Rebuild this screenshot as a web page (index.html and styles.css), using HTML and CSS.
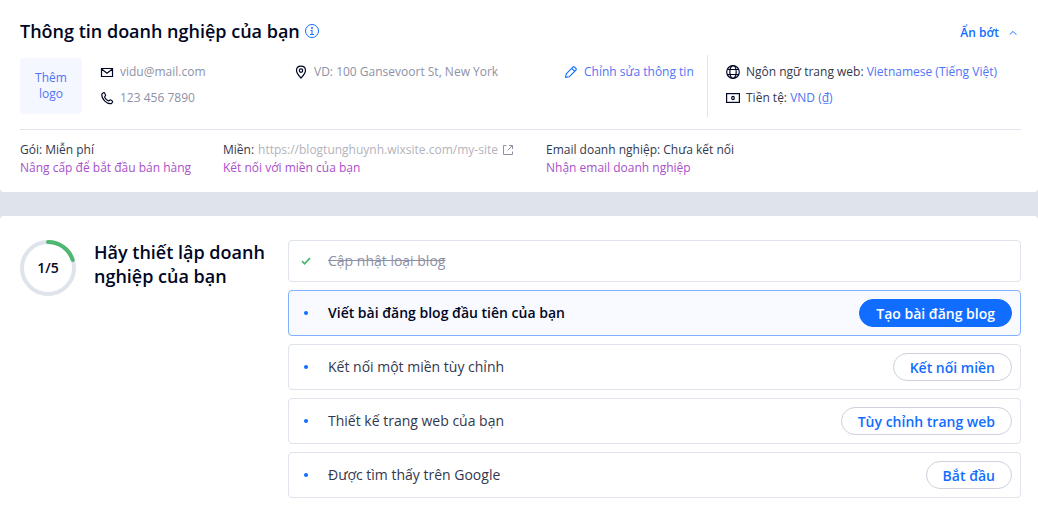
FILE: index.html
```html
<!DOCTYPE html>
<html lang="vi">
<head>
    <meta charset="UTF-8">
    <meta name="viewport" content="width=device-width, initial-scale=1.0">
    <title>Thông tin doanh nghiệp của bạn</title>
    <link rel="stylesheet" href="styles.css">
</head>
<body>
    <section class="panel business">
        <header class="business-header">
            <h1>Thông tin doanh nghiệp của bạn</h1>
            <svg class="info-icon" width="14" height="14" viewBox="0 0 14 14" fill="none" stroke="currentColor">
                <circle cx="7" cy="7" r="6.5"/>
                <path d="M5.5 6.5H7.5M7 6.5V10M5 10.5H9"/>
                <path d="M6 4H8" stroke-width="1.6"/>
            </svg>
            <button type="button" class="toggle">Ẩn bớt
                <svg width="8" height="6" viewBox="0 0 8 6" fill="none" stroke="currentColor"><path d="M.7 4.7L4 1.4L7.3 4.7"/></svg>
            </button>
        </header>

        <div class="business-info">
            <button type="button" class="logo-box">Thêm logo</button>
            <div class="contact">
                <div class="lines">
                    <div class="line">
                        <svg width="14" height="14" viewBox="0 0 14 14" fill="none" stroke="currentColor" stroke-width="1.2"><path d="M1.5 3.5H12.5V11.5H1.5ZM1.5 4L7 8.3L12.5 4"/></svg>
                        <span>vidu@mail.com</span>
                    </div>
                    <div class="line">
                        <svg width="14" height="14" viewBox="0 0 14 14" fill="none" stroke="currentColor" stroke-width="1.1" stroke-linejoin="round"><path d="M3.4 1.8L1.8 3C1.5 5.6 2.9 8.2 4.8 10.1C6.7 12 9 12.9 11.3 12.6L12.6 11.1C12.8 10.7 12.7 10.3 12.3 10L10.3 8.8L8.6 10C6.8 9.2 5.3 7.7 4.5 6L5.7 4.4L4.6 2.1C4.3 1.6 3.8 1.5 3.4 1.8Z"/></svg>
                        <span>123 456 7890</span>
                    </div>
                </div>
                <div class="line">
                    <svg width="14" height="14" viewBox="0 0 14 14" fill="none" stroke="currentColor" stroke-width="1.2"><path d="M7 13.1C5.2 11 2.5 8.2 2.5 5.5C2.5 2.9 4.5 1.2 7 1.2S11.5 2.9 11.5 5.5C11.5 8.2 8.8 11 7 13.1Z"/><circle cx="7" cy="5.6" r="1.7"/></svg>
                    <span>VD: 100 Gansevoort St, New York</span>
                </div>
                <a href="#" class="line edit">
                    <svg width="14" height="14" viewBox="0 0 14 14" fill="none" stroke="currentColor" stroke-width="1.1" stroke-linejoin="round"><path d="M1.6 12.4L2.2 8.8L8.9 2.1Q9.7 1.3 10.5 2.1L11.9 3.5Q12.7 4.3 11.9 5.1L5.2 11.8ZM7.7 3.3L10.7 6.3"/></svg>
                    <span>Chỉnh sửa thông tin</span>
                </a>
            </div>
            <div class="region lines">
                <div class="line">
                    <svg width="14" height="14" viewBox="0 0 14 14" fill="none" stroke="currentColor" stroke-width="1.2"><circle cx="7" cy="7" r="6.3"/><ellipse cx="7" cy="7" rx="3.2" ry="6.3"/><path d="M1.5 4.5H12.5M1.5 9.5H12.5"/></svg>
                    <span>Ngôn ngữ trang web: <a href="#">Vietnamese (Tiếng Việt)</a></span>
                </div>
                <div class="line">
                    <svg width="14" height="14" viewBox="0 0 14 14" fill="none" stroke="currentColor" stroke-width="1.2"><rect x=".6" y="2.6" width="12.8" height="8.8"/><ellipse cx="7" cy="7" rx="1.3" ry="1.6"/></svg>
                    <span>Tiền tệ: <a href="#">VND (₫)</a></span>
                </div>
            </div>
        </div>

        <div class="plans">
            <div>
                <p>Gói: Miễn phí</p>
                <a href="#">Nâng cấp để bắt đầu bán hàng</a>
            </div>
            <div>
                <p>Miền: <span class="url">https://blogtunghuynh.wixsite.com/my-site</span>
                    <svg width="12" height="12" viewBox="0 0 12 12" fill="none" stroke="currentColor"><path d="M4.5 1.5H1.5V10.5H10.5V7.5M7 1.5H10.5V5M10.5 1.5L5.5 6.5"/></svg>
                </p>
                <a href="#">Kết nối với miền của bạn</a>
            </div>
            <div>
                <p>Email doanh nghiệp: Chưa kết nối</p>
                <a href="#">Nhận email doanh nghiệp</a>
            </div>
        </div>
    </section>

    <section class="panel setup">
        <div class="setup-title">
            <svg class="progress" width="56" height="56" viewBox="0 0 56 56" fill="none" stroke-width="4">
                <circle cx="28" cy="28" r="26" stroke="#dfe3eb"/>
                <path d="M28 2A26 26 0 0 1 52.7 20" stroke="#4eb772" stroke-linecap="round"/>
                <text x="28" y="33" text-anchor="middle">1/5</text>
            </svg>
            <h2>Hãy thiết lập doanh nghiệp của bạn</h2>
        </div>
        <ul class="steps">
            <li class="step done">
                <svg width="10" height="10" viewBox="0 0 10 10" fill="none" stroke="currentColor" stroke-width="1.8"><path d="M1 5.2L3.6 7.8L9 2.2"/></svg>
                <span>Cập nhật loại blog</span>
            </li>
            <li class="step active">
                <i class="dot"></i>
                <span>Viết bài đăng blog đầu tiên của bạn</span>
                <button type="button" class="button primary">Tạo bài đăng blog</button>
            </li>
            <li class="step">
                <i class="dot"></i>
                <span>Kết nối một miền tùy chỉnh</span>
                <button type="button" class="button">Kết nối miền</button>
            </li>
            <li class="step">
                <i class="dot"></i>
                <span>Thiết kế trang web của bạn</span>
                <button type="button" class="button">Tùy chỉnh trang web</button>
            </li>
            <li class="step">
                <i class="dot"></i>
                <span>Được tìm thấy trên Google</span>
                <button type="button" class="button">Bắt đầu</button>
            </li>
        </ul>
    </section>
</body>
</html>
```

FILE: styles.css
```css
:root {
    --blue: #116dff;
    --link: #4f74f5;
    --purple: #a94fc9;
    --text: #000624;
    --body-text: #33374d;
    --grey: #8e91a6;
    --line: #dfe3eb;
}
* {
    box-sizing: border-box;
}
body {
    margin: 0;
    font-family: 'Open Sans', 'Noto Sans', sans-serif;
    font-size: 12px;
    font-weight: 400;
    line-height: 18px;
    color: var(--body-text);
    background-color: var(--line);
}
h1, h2, p, ul {
    margin: 0;
    padding: 0;
}
h1, h2 {
    color: var(--text);
    font-size: 18px;
    font-weight: 600;
    line-height: 24px;
}
a {
    color: var(--link);
    text-decoration: none;
}
button {
    font-family: inherit;
    cursor: pointer;
}
svg {
    flex: none;
}
.panel {
    background-color: white;
    border-radius: 4px;
    padding: 0 17px 0 20px;
}
.business {
    padding-top: 19px;
    padding-bottom: 15px;
    margin-bottom: 24px;
    border-radius: 0 0 4px 4px;
}
.business-header {
    display: flex;
    align-items: center;
    height: 24px;
}
.info-icon {
    margin-left: 5px;
    color: var(--blue);
}
.toggle {
    display: flex;
    align-items: center;
    gap: 10px;
    margin-left: auto;
    padding: 3px 4px 0;
    border: none;
    background: none;
    color: var(--blue);
    font-size: 12px;
    font-weight: 600;
}
.business-info {
    display: flex;
    margin-top: 12px;
    padding-bottom: 12px;
    border-bottom: 1px solid var(--line);
}
.logo-box {
    width: 62px;
    height: 56px;
    margin: 3px 18px 3px 0;
    padding: 0 12px;
    border: none;
    border-radius: 4px;
    background-color: #f4f7ff;
    color: var(--link);
    font-size: 12px;
    line-height: 16px;
}
.contact {
    flex: 1;
    display: grid;
    grid-template-columns: 194fr 270fr 143fr;
    padding-top: 8px;
    color: var(--grey);
}
.lines {
    display: flex;
    flex-direction: column;
    gap: 8px;
}
.line {
    display: flex;
    align-items: center;
    gap: 6px;
    height: 18px;
    white-space: nowrap;
}
.line svg {
    color: var(--text);
}
.line.edit svg {
    color: var(--blue);
}
.region {
    width: 314px;
    padding: 8px 0 0 18px;
    border-left: 1px solid var(--line);
}
.plans {
    display: grid;
    grid-template-columns: 203fr 323fr 475fr;
    padding-top: 11px;
    white-space: nowrap;
}
.plans a {
    color: var(--purple);
}
.plans p {
    display: flex;
    align-items: center;
    gap: 4px;
}
.plans svg {
    color: var(--grey);
}
.url {
    color: #b3b3bb;
}
.setup {
    display: grid;
    grid-template-columns: 268px 1fr;
    min-height: 305px;
    padding-top: 24px;
    padding-bottom: 23px;
    border-radius: 4px 4px 0 0;
}
.setup-title {
    display: flex;
    align-items: flex-start;
    gap: 18px;
    padding-right: 20px;
}
.progress text {
    fill: var(--text);
    font-size: 14px;
    font-weight: 600;
}
.steps {
    display: flex;
    flex-direction: column;
    gap: 8px;
    list-style: none;
}
.step {
    display: flex;
    align-items: center;
    height: 46px;
    padding: 0 8px 0 12px;
    border: 1px solid var(--line);
    border-radius: 4px;
    font-size: 14px;
}
.step span {
    margin-left: 17px;
}
.step.done {
    height: 42px;
    color: var(--grey);
    text-decoration: line-through;
}
.step.done svg {
    color: #4eb772;
}
.step.active {
    border-color: #80b1ff;
    background-color: #f8faff;
    color: var(--text);
    font-weight: 600;
}
.dot {
    width: 4px;
    height: 4px;
    margin: 0 3px;
    border-radius: 50%;
    background-color: var(--blue);
}
.button {
    height: 28px;
    margin-left: auto;
    padding: 0 16px;
    border: 1px solid #cfd1dc;
    border-radius: 14px;
    background-color: white;
    color: var(--blue);
    font-size: 14px;
    font-weight: 600;
}
.button.primary {
    border-color: var(--blue);
    background-color: var(--blue);
    color: white;
}
.button:hover {
    opacity: 0.8;
}
```
